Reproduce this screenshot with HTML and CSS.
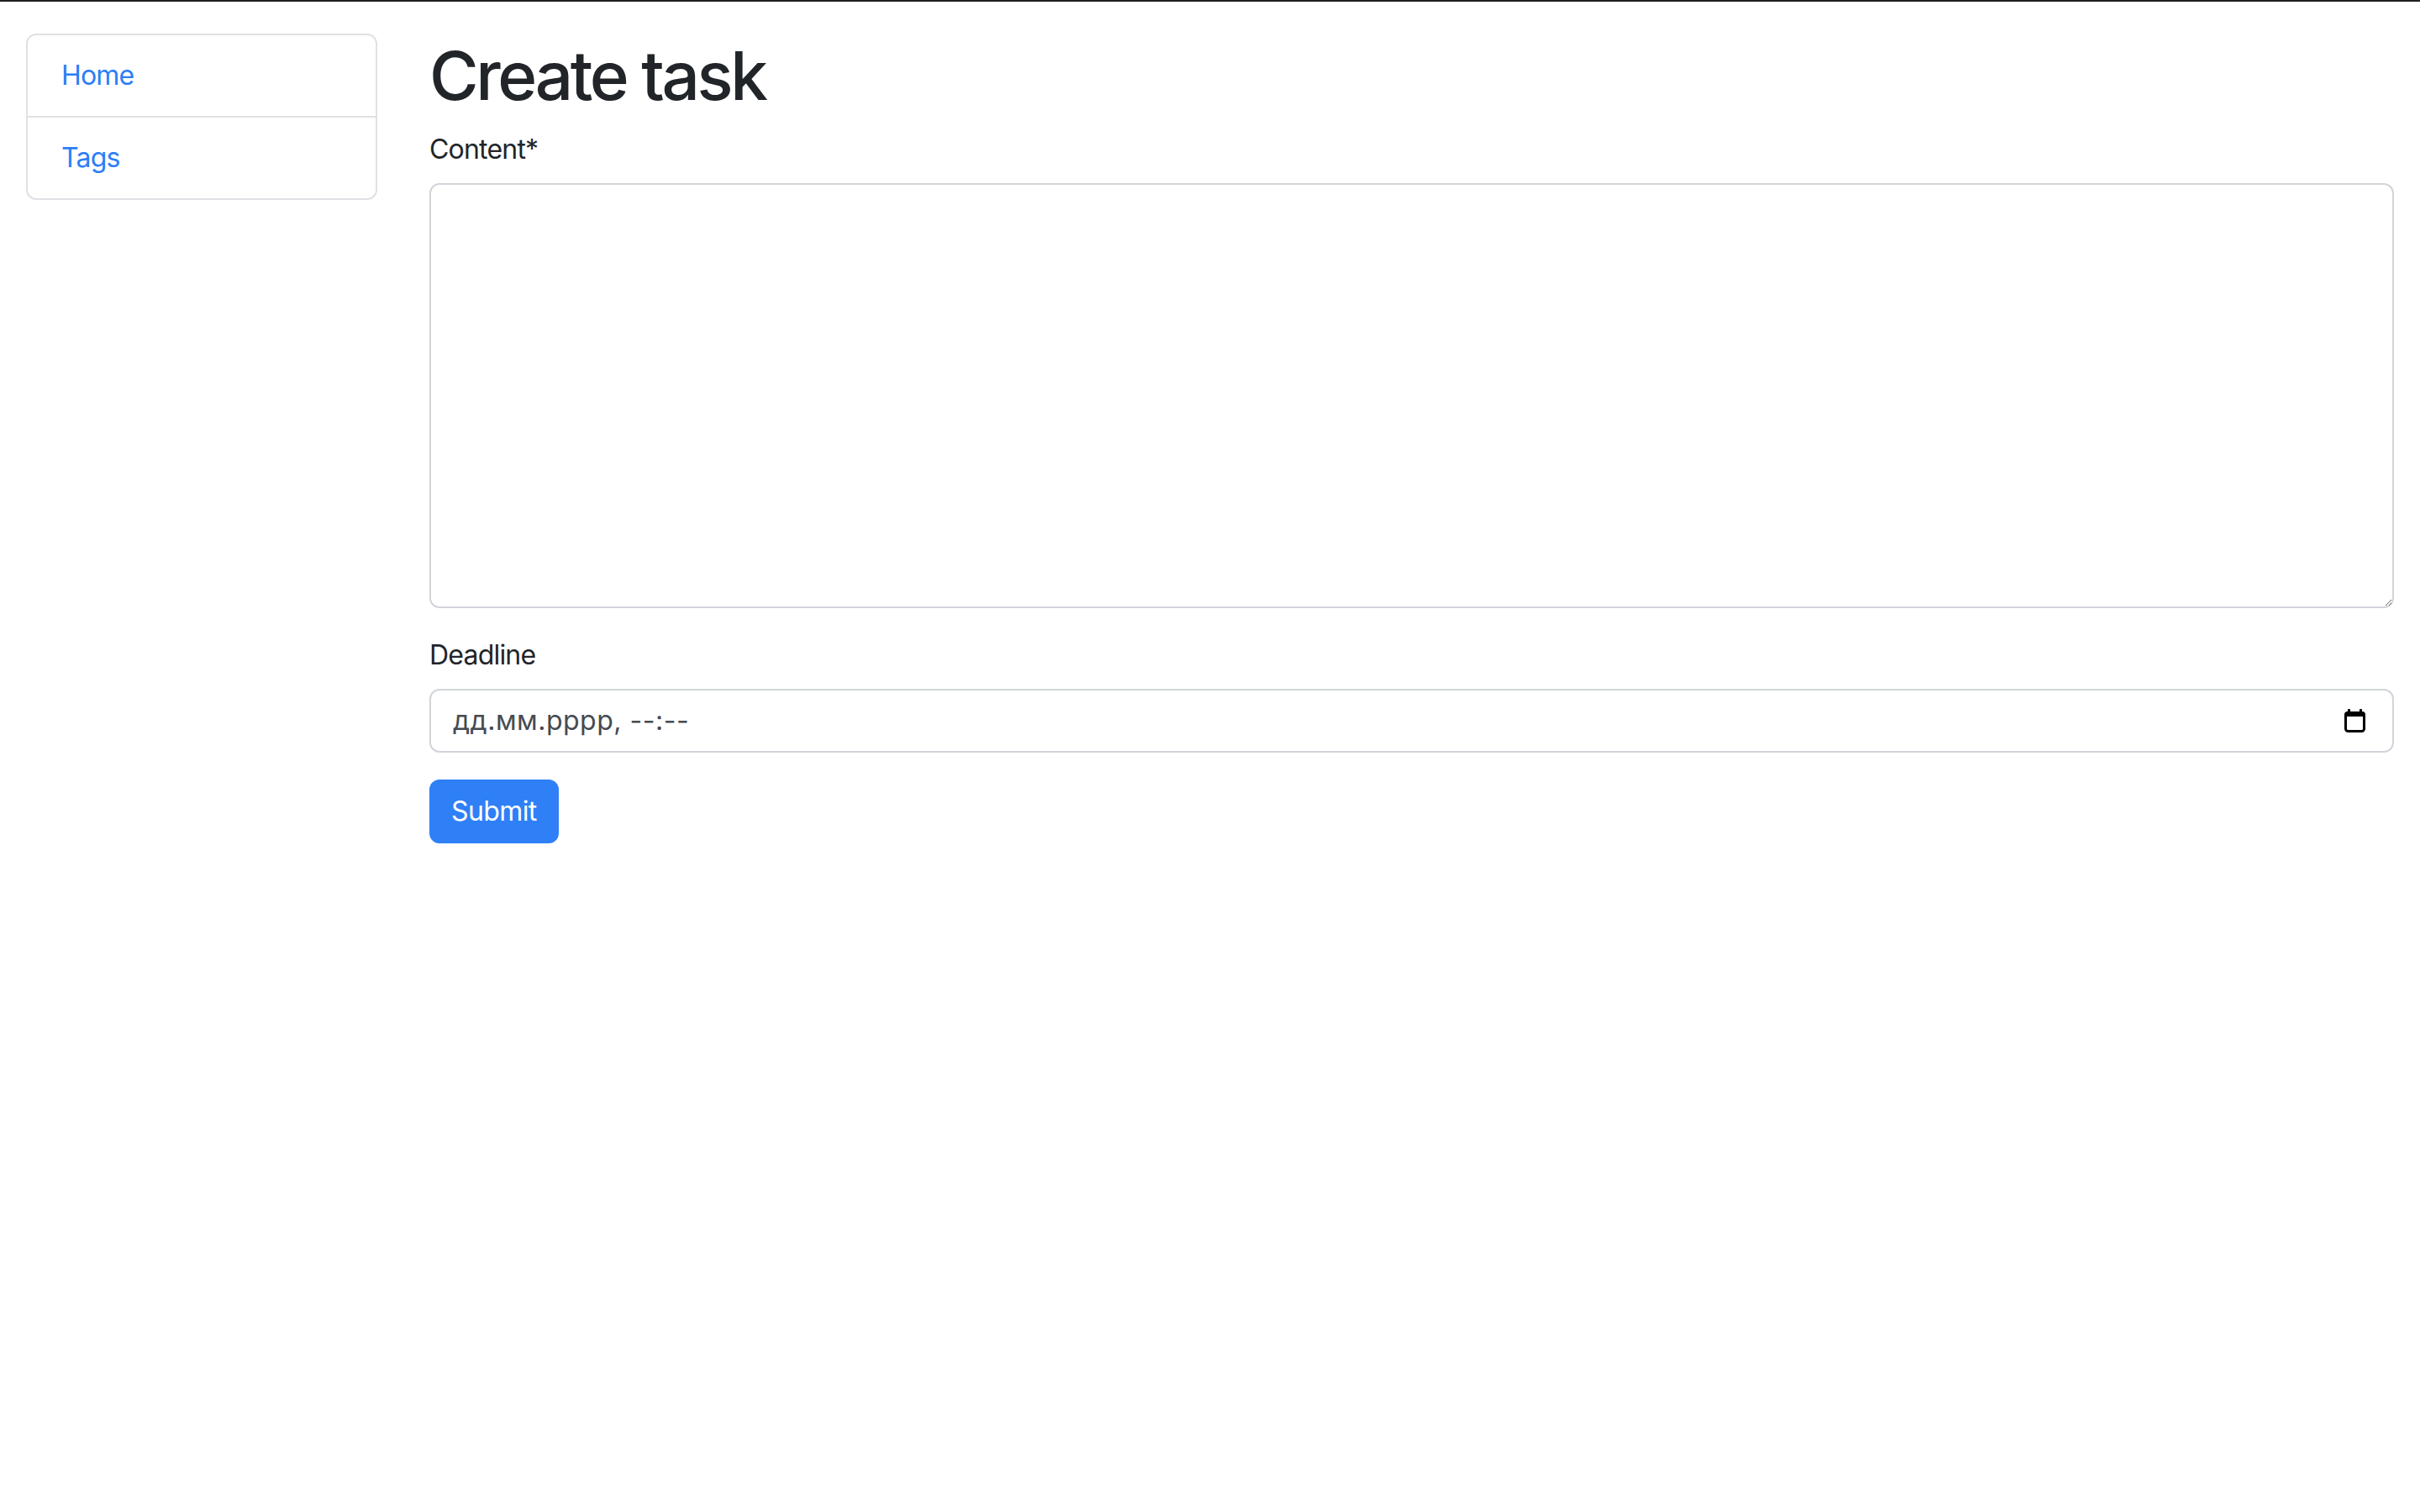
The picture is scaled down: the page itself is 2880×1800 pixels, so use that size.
FILE: index.html
```html
<!DOCTYPE html>
<html lang="ru">
<head>
<meta charset="utf-8">
<title>Create task</title>
<link rel="stylesheet" href="styles.css">
</head>
<body>
<div class="page">
  <aside class="sidebar">
    <nav class="nav-list">
      <a class="nav-item" href="#">Home</a>
      <a class="nav-item" href="#">Tags</a>
    </nav>
  </aside>
  <main class="main">
    <h1 class="title">Create task</h1>
    <form class="form">
      <div class="field">
        <label class="label" for="content">Content*</label>
        <textarea class="textarea" id="content"></textarea>
      </div>
      <div class="field">
        <label class="label">Deadline</label>
        <div class="date-input">
          <span class="date-text">дд.мм.рррр, --:--</span>
          <svg class="cal-icon" width="25" height="28" viewBox="0 0 25 28" aria-hidden="true">
            <rect x="4" y="0" width="3" height="6" rx="1" fill="#000"/>
            <rect x="18" y="0" width="3" height="6" rx="1" fill="#000"/>
            <path d="M4 3 H21 A4 4 0 0 1 25 7 V9 H0 V7 A4 4 0 0 1 4 3 Z" fill="#000"/>
            <rect x="1.5" y="4.5" width="22" height="22" rx="3" fill="none" stroke="#000" stroke-width="3"/>
          </svg>
        </div>
      </div>
      <button class="btn" type="button">Submit</button>
    </form>
  </main>
</div>
</body>
</html>
```
FILE: styles.css
```css
html, body {
  margin: 0;
  padding: 0;
  background: #ffffff;
}
body {
  border-top: 2px solid #1f1f1f;
  font-family: Inter, "Liberation Sans", sans-serif;
  font-size: 32px;
  line-height: 48px;
  letter-spacing: -0.8px;
  color: #212529;
}
.page {
  display: flex;
  align-items: flex-start;
  gap: 62px;
  padding: 38px 31px 0 31px;
}
.sidebar {
  width: 418px;
  flex: none;
}
.nav-list {
  display: flex;
  flex-direction: column;
  border: 2px solid #dfe1e4;
  border-radius: 12px;
}
.nav-item {
  display: block;
  padding: 24px 40px;
  color: #2c7ef7;
  text-decoration: none;
}
.nav-item + .nav-item {
  border-top: 2px solid #dfe1e4;
}
.main {
  flex: 1;
  min-width: 0;
  padding-top: 2px;
}
.title {
  margin: 0 0 16px 0;
  font-size: 80px;
  line-height: 96px;
  font-weight: 500;
  letter-spacing: -3.4px;
  color: #212529;
}
.field {
  margin-bottom: 32px;
}
.label {
  display: block;
  margin-bottom: 16px;
}
.textarea {
  display: block;
  box-sizing: border-box;
  width: 100%;
  height: 506px;
  border: 2px solid #d1d5da;
  border-radius: 12px;
  padding: 12px 24px;
  font: inherit;
  resize: vertical;
  background: #fff;
}
.date-input {
  box-sizing: border-box;
  height: 76px;
  border: 2px solid #d1d5da;
  border-radius: 12px;
  padding: 12px 32px 12px 26px;
  display: flex;
  align-items: center;
  justify-content: space-between;
}
.date-text {
  color: #464b51;
  letter-spacing: 0.5px;
}
.cal-icon {
  display: block;
}
.btn {
  display: block;
  box-sizing: border-box;
  height: 76px;
  padding: 12px 24px;
  border: 2px solid #2f80f7;
  border-radius: 12px;
  background: #2f80f7;
  color: #ffffff;
  font: inherit;
  letter-spacing: -0.6px;
  cursor: pointer;
}
```
